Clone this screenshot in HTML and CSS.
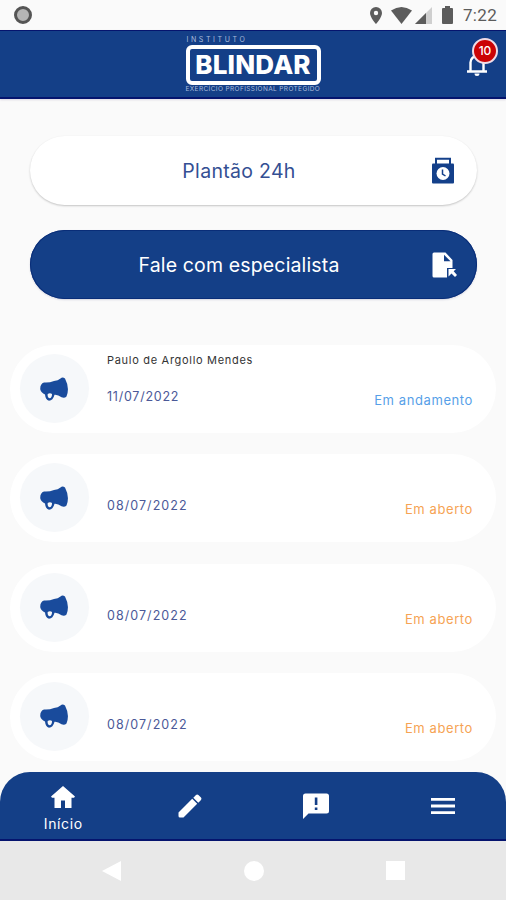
FILE: index.html
```html
<!DOCTYPE html>
<html lang="pt-BR">
<head>
	<meta charset="UTF-8">
	<title>Instituto Blindar</title>
	<link rel="stylesheet" href="styles.css">
</head>
<body>
	<svg class="defs" width="0" height="0">
		<symbol id="horn" viewBox="0 0 28 24">
			<path d="M4 5.500Q9 6 14 4Q18 3.500 20.500 1.500Q22.500-.3 25 1.500Q30 11 26.500 19.500Q24.500 21.500 21.500 20.300Q18 17.500 14.500 17.800Q13 23.700 9 23.700Q5.500 23 5 17.500Q1 15.500 .3 12.500Q-.2 7 4 5.500Z"/>
			<path class="hole" d="M7.700 17Q10 15.500 12 17Q12 21 9.500 21.300Q7.200 20.500 7.700 17Z"/>
		</symbol>
	</svg>

	<div class="status">
		<span class="record"></span>
		<div class="statusIcons">
			<svg class="pin" width="12" height="17" viewBox="0 0 12 17"><path d="M6 0a6 6 0 0 0-6 6c0 4.500 6 11 6 11s6-6.500 6-11a6 6 0 0 0-6-6zm0 8.200a2.200 2.200 0 1 1 0-4.400 2.200 2.200 0 0 1 0 4.400z"/></svg>
			<svg class="wifi" width="21" height="17" viewBox="0 0 22 17" preserveAspectRatio="none"><path d="M0 3.500Q11-3.500 22 3.500L11 17z"/></svg>
			<svg class="signal" width="17" height="17" viewBox="0 0 17 17"><path class="faint" d="M17 0v17H0z"/><path d="M11 6v11H0z"/></svg>
			<svg class="battery" width="11" height="18" viewBox="0 0 11 18"><path d="M3 0h5v2h2q1 0 1 1v14q0 1-1 1H1q-1 0-1-1V3q0-1 1-1h2z"/></svg>
			<span class="time">7:22</span>
		</div>
	</div>

	<header class="header">
		<div class="logo">
			<span class="logoTop">INSTITUTO</span>
			<strong class="logoName">BLINDAR</strong>
			<span class="logoSub">EXERCÍCIO PROFISSIONAL PROTEGIDO</span>
		</div>
		<div class="bell">
			<svg width="22" height="25" viewBox="0 0 22 25"><path class="line" d="M4.500 20V11.500a6.500 6.500 0 0 1 13 0V20M1 20.500h20"/><path d="M8.500 22.500h5a2.500 2.500 0 0 1-5 0zM9.500 5V3.500a1.500 1.500 0 0 1 3 0V5z"/></svg>
			<span class="badge">10</span>
		</div>
	</header>

	<main class="main">
		<div class="actions">
			<a class="btn light">
				<span class="label">Plantão 24h</span>
				<svg width="24" height="28" viewBox="0 0 24 28"><path class="line thin" d="M5 8V1.800h14V8"/><path d="M2 6.500h20q1 0 1 1v18q0 1-1 1H2q-1 0-1-1v-18q0-1 1-1z"/><circle class="face" cx="12" cy="16.500" r="6.500"/><path class="hand" d="M11.500 12.500V17l3 2"/></svg>
			</a>
			<a class="btn dark">
				<span class="label">Fale com especialista</span>
				<svg width="26" height="28" viewBox="0 0 26 28"><path d="M3 1.500h11.500l7 7.500V17H16v9.500H3q-1.500 0-1.500-1.500V3q0-1.500 1.500-1.500z"/><path class="fold" d="M13 3.700v6.500h6.500z"/><path d="M17.500 18h7.500l-2.300 2.300 3.300 3.700-2 2-3.500-3.500-3 3z"/></svg>
			</a>
		</div>

		<ul class="list">
			<li class="card">
				<div class="avatar"><svg width="28" height="24"><use href="#horn"/></svg></div>
				<div class="info"><span class="name">Paulo de Argollo Mendes</span><span class="date eleven">11/07/2022</span></div>
				<span class="state progress">Em andamento</span>
			</li>
			<li class="card">
				<div class="avatar"><svg width="28" height="24"><use href="#horn"/></svg></div>
				<div class="info"><span class="name"></span><span class="date">08/07/2022</span></div>
				<span class="state open">Em aberto</span>
			</li>
			<li class="card">
				<div class="avatar"><svg width="28" height="24"><use href="#horn"/></svg></div>
				<div class="info"><span class="name"></span><span class="date">08/07/2022</span></div>
				<span class="state open">Em aberto</span>
			</li>
			<li class="card">
				<div class="avatar"><svg width="28" height="24"><use href="#horn"/></svg></div>
				<div class="info"><span class="name"></span><span class="date">08/07/2022</span></div>
				<span class="state open">Em aberto</span>
			</li>
		</ul>
	</main>

	<nav class="tabs">
		<a class="tab home">
			<svg width="24" height="22" viewBox="0 0 24 22"><path d="M12 0l12 10.500-1 1.200h-2.500V22H14v-7.500h-4V22H3.500V11.700H1L0 10.500z"/></svg>
			<span>Início</span>
		</a>
		<a class="tab"><svg width="24" height="24" viewBox="0 0 24 24"><path d="M14.200 4.800l5 5L5.500 23.500H2q-1.500 0-1.500-1.500v-3.500zM15.300 3.700L18 1q1.200-1 2.400 0L23 3.600q1 1.200 0 2.400l-2.700 2.700z"/></svg></a>
		<a class="tab"><svg width="26" height="26" viewBox="0 0 26 26"><path d="M2.500.5h21Q26 .5 26 3v15q0 2.500-2.500 2.500H5.500L0 26V3Q0 .5 2.500.5z"/><path class="mark" d="M11.800 4.500h2.600v7.500h-2.600zM11.800 14.500h2.600V17h-2.600z"/></svg></a>
		<a class="tab"><svg width="24" height="16" viewBox="0 0 24 16"><path d="M0 0h24v2.800H0zM0 6.600h24v2.800H0zM0 13.200h24V16H0z"/></svg></a>
	</nav>

	<div class="system">
		<svg width="19" height="20" viewBox="0 0 19 20"><path d="M0 10L19 0v20z"/></svg>
		<span class="circle"></span>
		<span class="square"></span>
	</div>
</body>
</html>
```

FILE: styles.css
```css
*{
	margin: 0;
	padding: 0;
	box-sizing: border-box;
}
body{
	display: flex;
	flex-direction: column;
	width: 506px;
	height: 900px;
	overflow: hidden;
	background: #fafafa;
	font-family: Inter, "Noto Sans", sans-serif;
	color: #14408a;
}
svg{
	display: block;
	fill: currentColor;
	flex: none;
}
.defs{
	position: absolute;
}
.line{
	fill: none;
	stroke: currentColor;
	stroke-width: 2.4;
}
.thin{
	stroke-width: 2;
}
.hole{
	fill: #f6f8fa;
}
/* barra de status */
.status{
	display: flex;
	justify-content: space-between;
	align-items: center;
	height: 30px;
	padding: 0 8px 0 14px;
	color: #5c5c5c;
}
.record{
	width: 18px;
	height: 18px;
	border: 3px solid #555;
	border-radius: 50%;
	background: #b5b5b5;
}
.statusIcons{
	display: flex;
	align-items: center;
}
.wifi{
	margin-left: 9px;
}
.signal{
	margin-left: 3px;
}
.faint{
	fill: #cfcfcf;
}
.battery{
	margin-left: 10px;
}
.time{
	width: 35px;
	margin-left: 10px;
	font: 17px/30px Roboto, sans-serif;
	letter-spacing: .3px;
	white-space: nowrap;
}
/* topo */
.header{
	display: grid;
	grid-template-columns: 1fr 135px 1fr;
	height: 69px;
	background: #143f87;
	border-top: 1px solid #05146e;
	border-bottom: 2px solid #05146e;
	box-shadow: 0 1px 2px #ded8e4;
	color: #fff;
}
.logo{
	grid-column: 2;
	display: flex;
	flex-direction: column;
	padding-top: 5px;
	white-space: nowrap;
}
.logoTop{
	padding-left: 1px;
	font-size: 7px;
	line-height: 8px;
	letter-spacing: 2.600px;
	color: #a9bbdc;
}
.logoName{
	height: 40px;
	margin: 1px 0 0;
	border: 4px solid #fff;
	border-radius: 6px;
	font-size: 26px;
	font-weight: 800;
	line-height: 32px;
	letter-spacing: .2px;
	text-align: center;
}
.logoSub{
	font-size: 6.500px;
	line-height: 9px;
	letter-spacing: .38px;
	color: #a9bbdc;
}
.bell{
	grid-column: 3;
	position: relative;
	justify-self: end;
	padding: 20px 18px 0 0;
}
.badge{
	position: absolute;
	top: 7px;
	right: 8px;
	width: 26px;
	height: 26px;
	border: 2px solid #f1dbe5;
	border-radius: 50%;
	background: #cb0305;
	font-size: 12px;
	font-weight: 500;
	line-height: 22px;
	text-align: center;
}
.main{
	flex: 1;
	padding: 37px 10px 0;
}
.actions{
	display: flex;
	flex-direction: column;
	gap: 25px;
	padding: 0 19px 0 20px;
}
.btn{
	display: flex;
	align-items: center;
	height: 69px;
	padding: 0 21px 0 30px;
	border-radius: 35px;
}
.light{
	background: #fff;
	box-shadow: 0 1px 2px #c4c4c4;
}
.light .label{
	color: #344f93;
}
.dark{
	background: #143f87;
	box-shadow: inset 0 0 0 1px #092d78, 0 1px 2px #d5d5df;
	color: #fff;
}
.btn svg{
	width: 26px;
}
.dark svg{
	margin: 0 -1px 0 1px;
}
.label{
	flex: 1;
	padding-right: 12px;
	font-size: 19.500px;
	line-height: 24px;
	letter-spacing: .3px;
	text-align: center;
}
.dark .label{
	letter-spacing: .15px;
}
.face{
	fill: #fff;
}
.hand{
	fill: none;
	stroke: #14408a;
	stroke-width: 1.5;
}
.fold, .mark{
	fill: #143f87;
}
/* lista de chamados */
.list{
	display: flex;
	flex-direction: column;
	gap: 21.300px;
	margin-top: 46px;
	list-style: none;
}
.card{
	display: flex;
	height: 88px;
	padding: 0 23px 0 10px;
	border-radius: 44px;
	background: #fff;
}
.avatar{
	display: flex;
	align-items: center;
	justify-content: center;
	width: 69px;
	height: 69px;
	margin-top: 9px;
	padding: 0 2px 0 0;
	border-radius: 50%;
	background: #f6f8fa;
	color: #194b9c;
}
.info{
	flex: 1;
	display: flex;
	flex-direction: column;
	gap: 19px;
	padding: 6px 0 0 18px;
	white-space: nowrap;
}
.name{
	height: 18px;
	font-size: 11px;
	line-height: 18px;
	letter-spacing: .7px;
	color: #333;
}
.date{
	font-size: 12.500px;
	line-height: 18px;
	letter-spacing: 1.050px;
	color: #4b5998;
}
.eleven{
	letter-spacing: .75px;
}
.state{
	align-self: flex-start;
	padding-top: 46px;
	font-size: 13px;
	line-height: 18px;
	letter-spacing: .6px;
}
.progress{
	color: #579fe8;
}
.open{
	color: #f6a354;
}
/* menu inferior */
.tabs{
	display: grid;
	grid-template-columns: repeat(4, 1fr);
	height: 69px;
	border-radius: 30px 30px 0 0;
	border-bottom: 2px solid #05146e;
	background: #143f87;
	color: #fff;
}
.tab{
	display: flex;
	flex-direction: column;
	align-items: center;
	justify-content: center;
}
.home{
	justify-content: flex-start;
	gap: 7px;
	padding-top: 14px;
	font-size: 14px;
	line-height: 17px;
	letter-spacing: .6px;
}
.system{
	display: flex;
	align-items: center;
	justify-content: space-between;
	height: 59px;
	padding: 0 101px 0 102px;
	background: #e8e8e8;
	color: #fff;
}
.circle{
	width: 20px;
	height: 20px;
	border-radius: 50%;
	background: #fff;
}
.square{
	width: 19px;
	height: 19px;
	background: #fff;
}
```
